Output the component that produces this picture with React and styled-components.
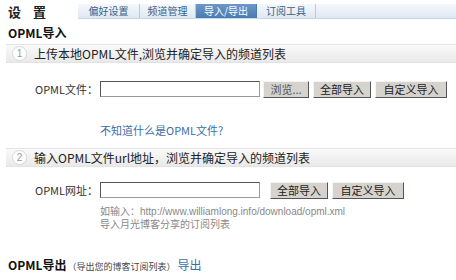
import React from "react";
import styled, { createGlobalStyle } from "styled-components";

const Global = createGlobalStyle`
  html, body { margin: 0; padding: 0; background: #fff; }
  body { font-family: "Noto Sans CJK SC", "Noto Sans", sans-serif; color: #222; font-size: 12px; }
`;

const Page = styled.div`
  width: 456px;
  height: 280px;
  overflow: hidden;
  padding: 4px 0 0 8px;
  box-sizing: border-box;
`;

const Header = styled.div`
  display: flex;
  align-items: center;
  height: 15px;
`;

const Title = styled.div`
  width: 70px;
  font-size: 13px;
  font-weight: bold;
  letter-spacing: 12px;
  line-height: 15px;
  color: #222;
`;

const TabBar = styled.div`
  flex: 1;
  display: flex;
  height: 15px;
  box-sizing: border-box;
  background: linear-gradient(#f4f8fc, #dfe8f2);
  border-bottom: 1px solid #c9d6e4;
`;

const Tab = styled.div`
  width: ${(p) => p.w}px;
  text-align: center;
  font-size: 10px;
  line-height: 14px;
  color: ${(p) => (p.active ? "#fff" : "#3a5f86")};
  background: ${(p) => (p.active ? "linear-gradient(#6c98c8, #4a7bb2)" : "transparent")};
  border-right: 1px solid ${(p) => (p.active ? "#4a7bb2" : "#b9c9db")};
`;

const SectionTitle = styled.div`
  margin-top: 7px;
  font-size: 12px;
  font-weight: bold;
  line-height: 14px;
  color: #111;
`;

const StepBar = styled.div`
  display: flex;
  align-items: center;
  gap: 7px;
  margin: ${(p) => p.mt}px 0 0 -2px;
  height: 17px;
  padding-left: 6px;
  background: linear-gradient(#fafafa, #e9e9e9);
  border-top: 1px solid #e4e4e4;
  border-bottom: 1px solid #e2e2e2;
  font-size: 12px;
  line-height: 17px;
  color: #222;
`;

const Num = styled.span`
  width: 13px;
  height: 13px;
  border-radius: 50%;
  background: #fff;
  border: 1px solid #d8d8d8;
  color: #999;
  font-size: 10px;
  line-height: 13px;
  text-align: center;
  font-family: "Liberation Sans", sans-serif;
`;

const FormRow = styled.div`
  display: flex;
  align-items: center;
  margin: ${(p) => p.mt}px 0 0 27px;
  height: 18px;
`;

const Label = styled.span`
  width: 65px;
  font-size: 11px;
  line-height: 14px;
  color: #333;
`;

const Input = styled.div`
  width: 158px;
  height: 14px;
  background: #fff;
  border: 1px solid #999;
  border-top-color: #555;
  border-left-color: #555;
`;

const Button = styled.button`
  margin-left: ${(p) => p.ml}px;
  width: ${(p) => p.w}px;
  height: 17px;
  padding: 0;
  font-family: "Noto Sans CJK SC", sans-serif;
  font-size: 11px;
  line-height: 13px;
  color: ${(p) => (p.dim ? "#555" : "#222")};
  background: #d6d3ce;
  border: 1px solid;
  border-color: #f4f4f4 #555 #555 #f4f4f4;
`;

const Link = styled.a`
  display: block;
  margin: ${(p) => p.mt}px 0 0 92px;
  font-size: 11px;
  line-height: 14px;
  color: #3b6ea5;
  text-decoration: none;
`;

const Hint = styled.div`
  margin: ${(p) => p.mt}px 0 0 92px;
  font-family: "Liberation Sans", "Noto Sans CJK SC", sans-serif;
  font-size: 10px;
  line-height: 13px;
  color: #888;
`;

const Export = styled.div`
  display: flex;
  align-items: baseline;
  margin-top: 27px;
  line-height: 14px;
`;

const ExportTitle = styled.span`
  font-size: 12px;
  font-weight: bold;
  color: #111;
`;

const Small = styled.span`
  font-size: 9px;
  color: #444;
  margin: 0 2px 0 1px;
`;

const ExportLink = styled.a`
  font-size: 12px;
  color: #3b6ea5;
`;

export default function App() {
  return (
    <Page>
      <Global />
      <Header>
        <Title>设置</Title>
        <TabBar>
          <Tab w={61}>偏好设置</Tab>
          <Tab w={55}>频道管理</Tab>
          <Tab w={60} active>导入/导出</Tab>
          <Tab w={58}>订阅工具</Tab>
        </TabBar>
      </Header>
      <SectionTitle>OPML导入</SectionTitle>
      <StepBar mt={4}>
        <Num>1</Num>
        上传本地OPML文件,浏览并确定导入的频道列表
      </StepBar>
      <FormRow mt={17}>
        <Label>OPML文件：</Label>
        <Input />
        <Button ml={3} w={46} dim>浏览...</Button>
        <Button ml={4} w={58}>全部导入</Button>
        <Button ml={4} w={72}>自定义导入</Button>
      </FormRow>
      <Link mt={25}>不知道什么是OPML文件?</Link>
      <StepBar mt={11}>
        <Num>2</Num>
        输入OPML文件url地址，浏览并确定导入的频道列表
      </StepBar>
      <FormRow mt={14}>
        <Label>OPML网址：</Label>
        <Input />
        <Button ml={10} w={58}>全部导入</Button>
        <Button ml={4} w={72}>自定义导入</Button>
      </FormRow>
      <Hint mt={6}>如输入：http://www.williamlong.info/download/opml.xml</Hint>
      <Hint mt={0}>导入月光博客分享的订阅列表</Hint>
      <Export>
        <ExportTitle>OPML导出</ExportTitle>
        <Small>（导出您的博客订阅列表）</Small>
        <ExportLink>导出</ExportLink>
      </Export>
    </Page>
  );
}
